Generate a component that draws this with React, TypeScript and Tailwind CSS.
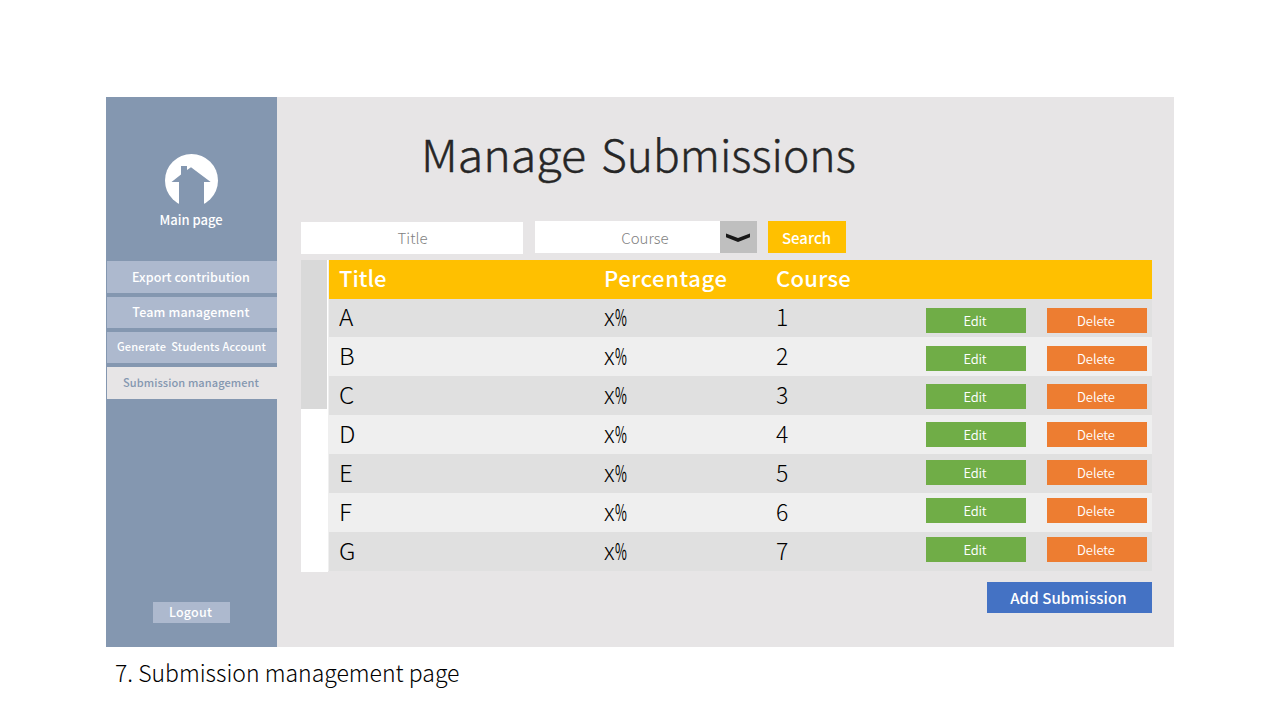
const light = 'font-["Noto_Sans_CJK_SC","Noto_Sans",sans-serif] font-light';
const book = 'font-["Noto_Sans_CJK_SC","Noto_Sans",sans-serif] font-[350]';
const bold = 'font-["Noto_Sans_CJK_SC","Noto_Sans",sans-serif] font-medium';

const menu = [
  { label: 'Export contribution', box: 'mt-[14px] h-8 bg-[#adb9ce]', text: 'pr-0.5 text-[12.5px] tracking-[0.05px]' },
  { label: 'Team management', box: 'mt-1 h-[31px] bg-[#adb9ce]', text: 'pr-0.5 text-[12.5px] tracking-[0.15px]' },
  { label: 'Generate  Students Account', box: 'mt-1 h-[31px] bg-[#adb9ce]', text: 'pr-px pb-[2px] text-[11px] tracking-[0.17px]' },
  { label: 'Submission management', box: 'mt-1 h-8 bg-[#e7e5e6] text-[#8497b0]', text: 'pr-0.5 pb-[2px] text-[11px] tracking-[0.1px]' },
];

const rows = [
  { title: 'A', course: '1', box: 'h-[38px] bg-[#e0e0e0] leading-[35px]', pad: 'pt-[9px]' },
  { title: 'B', course: '2', box: 'h-[39px] bg-[#efefef] leading-[37px]', pad: 'pt-[9px]' },
  { title: 'C', course: '3', box: 'h-[39px] bg-[#e0e0e0] leading-[37px]', pad: 'pt-2' },
  { title: 'D', course: '4', box: 'h-[39px] bg-[#efefef] leading-[37px]', pad: 'pt-[7px]' },
  { title: 'E', course: '5', box: 'h-[39px] bg-[#e0e0e0] leading-[37px]', pad: 'pt-1.5' },
  { title: 'F', course: '6', box: 'h-[39px] bg-[#efefef] leading-[37px]', pad: 'pt-[5px]' },
  { title: 'G', course: '7', box: 'h-[39px] bg-[#e0e0e0] leading-[37px]', pad: 'pt-[5px]' },
];

function HomeIcon() {
  return (
    <svg width="54" height="54" viewBox="165 153 54 54" className="block">
      <circle cx="191.5" cy="180.5" r="26.5" fill="#fff" />
      <path d="M171.5 182 L181 174.5 V166 H187 V170 L191 167.3 L210.7 182 H204 V208 H179 V182 Z" fill="#8497b0" />
    </svg>
  );
}

function Sidebar() {
  return (
    <nav className="flex w-[171px] flex-col bg-[#8497b0] pl-px text-white">
      <div className="flex h-[150px] flex-col items-center pt-14">
        <HomeIcon />
        <span className={`${bold} mt-0.5 pr-0.5 text-[13px] leading-[22px]`}>Main page</span>
      </div>
      {menu.map((m) => (
        <button key={m.label} className={`${bold} ${m.box} flex items-center justify-center whitespace-pre`}>
          <span className={m.text}>{m.label}</span>
        </button>
      ))}
      <button className={`${bold} mt-[203px] ml-[46px] flex h-[21px] w-[77px] items-center justify-center bg-[#adb9ce] pr-0.5 text-[12.5px] tracking-[0.2px]`}>
        Logout
      </button>
    </nav>
  );
}

function Filters() {
  return (
    <div className={`${light} flex h-[33px] text-[15px] leading-[34px] text-[#7f7f7f]`}>
      <div className="mt-px h-8 w-[222px] bg-white pl-px text-center leading-[32px]">Title</div>
      <div className="ml-3 flex h-8 w-[222px] bg-white">
        <span className="w-[185px] pl-[35px] text-center">Course</span>
        <span className="flex h-8 w-[37px] bg-[#bfbfbf]">
          <svg width="37" height="32" viewBox="0 0 37 32">
            <path d="M6 12.5 L18 17 L30 12.5 V16.3 L18 21 L6 16.3 Z" fill="#181818" />
          </svg>
        </span>
      </div>
      <button className={`${bold} ml-[11px] h-8 w-[78px] bg-[#ffc000] pr-px text-[15px] leading-[34px] text-white`}>Search</button>
    </div>
  );
}

function Table() {
  return (
    <div className="mt-1.5 flex h-[312px]">
      <div className="w-[27px] bg-white">
        <div className="h-[149px] w-[26px] bg-[#d9d9d9]" />
      </div>
      <div className="h-[311px] w-[824px] bg-[#efefef] pl-px text-[23px]">
        <div className={`${bold} grid h-[39px] grid-cols-[265px_172px_1fr] bg-[#ffc000] pl-[10px] text-[22px] leading-[35px] text-white`}>
          <span>Title</span>
          <span className="tracking-[0.6px]">Percentage</span>
          <span className="tracking-[0.3px]">Course</span>
        </div>
        {rows.map((r) => (
          <div key={r.title} className={`${light} ${r.box} grid grid-cols-[265px_172px_150px_121px_100px] pl-[10px] text-black`}>
            <span className="origin-left scale-x-[1.06]">{r.title}</span>
            <span className="flex">
              x<span className="origin-left scale-x-[0.56] font-normal">%</span>
            </span>
            <span>{r.course}</span>
            <span className={r.pad}>
              <button className={`${book} block h-[25px] w-[100px] bg-[#70ad47] pr-0.5 text-[13px] leading-[26px] tracking-[-0.2px] text-white`}>Edit</button>
            </span>
            <span className={r.pad}>
              <button className={`${book} block h-[25px] w-[100px] bg-[#ed7d31] pr-0.5 text-[13px] leading-[26px] tracking-[-0.1px] text-white`}>Delete</button>
            </span>
          </div>
        ))}
      </div>
    </div>
  );
}

export default function App() {
  return (
    <div className="h-[720px] w-[1280px] overflow-hidden bg-white pt-[97px] pl-[106px]">
      <div className="flex h-[550px] w-[1068px] bg-[#e7e5e6]">
        <Sidebar />
        <main className="w-[875px] pl-6">
          <h1 className={`${light} h-[124px] pt-[23px] pl-[120px] text-[44px] leading-[66px] text-[#262626] [-webkit-text-stroke:0.4px_#262626]`}>
            <span className="mr-[14px] inline-block origin-left scale-x-[1.06]">Manage</span>{' '}
            <span className="inline-block origin-left scale-x-[1.01]">Submissions</span>
          </h1>
          <Filters />
          <Table />
          <button className={`${bold} mt-[10px] ml-[686px] block h-[31px] w-[165px] bg-[#4472c4] pr-0.5 text-[15px] leading-[32px] tracking-[0.1px] text-white`}>
            Add Submission
          </button>
        </main>
      </div>
      <p className={`${light} pl-[9px] text-[23px] leading-[51px] text-black`}>7. Submission management page</p>
    </div>
  );
}
